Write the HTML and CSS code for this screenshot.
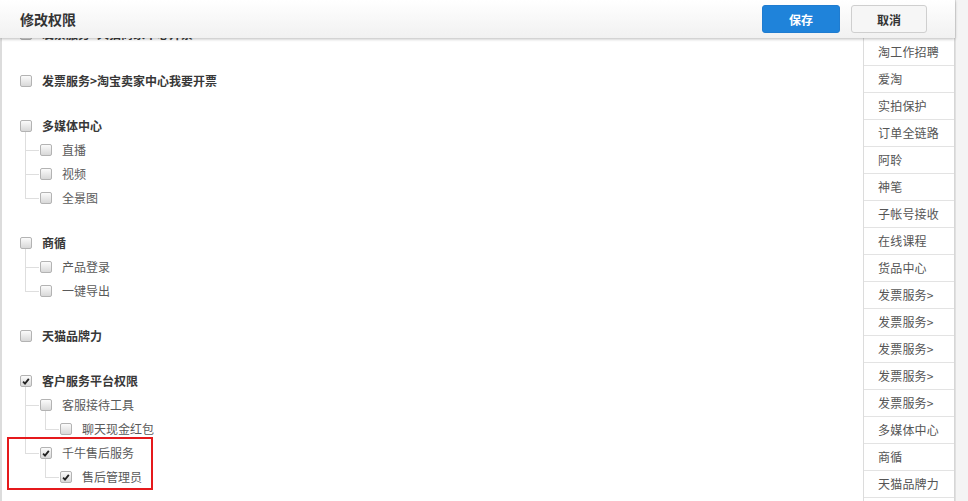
FILE: index.html
```html
<!DOCTYPE html>
<html lang="zh-CN">
<head>
<meta charset="utf-8">
<title>修改权限</title>
<link rel="stylesheet" href="styles.css">
</head>
<body>
<div class="page">
  <div class="main">
    <div class="group">
      <div class="row top"><span class="cb"></span><span class="lbl">发票服务>天猫商家中心开票</span></div>
    </div>
    <div class="group">
      <div class="row top"><span class="cb"></span><span class="lbl">发票服务>淘宝卖家中心我要开票</span></div>
    </div>
    <div class="group">
      <div class="row top"><span class="cb"></span><span class="lbl">多媒体中心</span></div>
      <ul class="children">
        <li><div class="row"><span class="cb"></span><span class="lbl">直播</span></div></li>
        <li><div class="row"><span class="cb"></span><span class="lbl">视频</span></div></li>
        <li><div class="row"><span class="cb"></span><span class="lbl">全景图</span></div></li>
      </ul>
    </div>
    <div class="group">
      <div class="row top"><span class="cb"></span><span class="lbl">商循</span></div>
      <ul class="children">
        <li><div class="row"><span class="cb"></span><span class="lbl">产品登录</span></div></li>
        <li><div class="row"><span class="cb"></span><span class="lbl">一键导出</span></div></li>
      </ul>
    </div>
    <div class="group">
      <div class="row top"><span class="cb"></span><span class="lbl">天猫品牌力</span></div>
    </div>
    <div class="group">
      <div class="row top"><span class="cb on"><svg viewBox="0 0 11 11"><path d="M2.3 5.6 L4.4 7.8 L8.6 2.6" fill="none" stroke="#222" stroke-width="2"/></svg></span><span class="lbl">客户服务平台权限</span></div>
      <ul class="children">
        <li>
          <div class="row"><span class="cb"></span><span class="lbl">客服接待工具</span></div>
          <ul class="children">
            <li><div class="row"><span class="cb"></span><span class="lbl">聊天现金红包</span></div></li>
          </ul>
        </li>
        <li>
          <div class="row"><span class="cb on"><svg viewBox="0 0 11 11"><path d="M2.3 5.6 L4.4 7.8 L8.6 2.6" fill="none" stroke="#222" stroke-width="2"/></svg></span><span class="lbl">千牛售后服务</span></div>
          <ul class="children">
            <li><div class="row"><span class="cb on"><svg viewBox="0 0 11 11"><path d="M2.3 5.6 L4.4 7.8 L8.6 2.6" fill="none" stroke="#222" stroke-width="2"/></svg></span><span class="lbl">售后管理员</span></div></li>
          </ul>
        </li>
      </ul>
    </div>
  </div>
  <ul class="sidebar">
    <li>淘工作招聘</li>
    <li>爱淘</li>
    <li>实拍保护</li>
    <li>订单全链路</li>
    <li>阿聆</li>
    <li>神笔</li>
    <li>子帐号接收</li>
    <li>在线课程</li>
    <li>货品中心</li>
    <li>发票服务&gt;</li>
    <li>发票服务&gt;</li>
    <li>发票服务&gt;</li>
    <li>发票服务&gt;</li>
    <li>发票服务&gt;</li>
    <li>多媒体中心</li>
    <li>商循</li>
    <li>天猫品牌力</li>
    <li></li>
  </ul>
  <div class="scroll"></div>

  <div class="header">
    <div class="title">修改权限</div>
    <div class="actions">
      <button class="btn primary">保存</button>
      <button class="btn">取消</button>
    </div>
  </div>
  <div class="mark"></div>
</div>
</body>
</html>
```

FILE: styles.css
```css
* { box-sizing: border-box; }
html, body {
  margin: 0;
  padding: 0;
  background: #fff;
  font-family: "Noto Sans CJK SC", "Liberation Sans", sans-serif;
  font-size: 12px;
  color: #555;
  overflow: hidden;
}
.page {
  position: relative;
  display: flex;
  width: 968px;
  height: 501px;
  overflow: hidden;
}
.main {
  flex: 1;
  border-left: 2px solid #dcdcdc;
  padding-top: 22px;
}
.group { margin-bottom: 21px; }
.group:first-child { margin-bottom: 23px; }
.row {
  height: 24px;
  display: flex;
  align-items: center;
}
.row.top { padding-left: 18px; }
.lbl {
  margin-left: 10px;
  line-height: 24px;
  white-space: nowrap;
  color: #5a5a5a;
}
.row.top .lbl {
  font-weight: bold;
  color: #383838;
}
.cb {
  width: 12px;
  height: 12px;
  flex: none;
  border: 1px solid #b3b3b3;
  border-radius: 2px;
  background: linear-gradient(#fbfbfb, #d8d8d8);
  display: flex;
  align-items: center;
  justify-content: center;
}
.cb svg { width: 11px; height: 11px; display: block; }
.children {
  list-style: none;
  margin: 0 0 0 23px;
  padding: 0;
}
.children .children { margin-left: 5px; }
.children > li {
  position: relative;
  padding-left: 15px;
}
.children > li::before {
  content: "";
  position: absolute;
  left: 0;
  top: 12px;
  width: 14px;
  border-top: 1px solid #dedede;
}
.children > li::after {
  content: "";
  position: absolute;
  left: 0;
  top: -6px;
  height: 18px;
  border-left: 1px solid #dedede;
}
.children > li:not(:last-child)::after { height: calc(100% + 6px); }

.sidebar {
  list-style: none;
  margin: 0;
  padding: 39px 0 0 0;
  width: 92px;
  flex: none;
  border-left: 1px solid #dcdcdc;
  border-right: 1px solid #d6d6d6;
}
.sidebar li {
  height: 27px;
  line-height: 26px;
  padding-left: 14px;
  border-bottom: 1px solid #e3e3e3;
  color: #555;
  white-space: nowrap;
  letter-spacing: 0.2px;
}
.scroll {
  width: 13px;
  flex: none;
  background: #f4f4f4;
  border-left: 1px solid #e0e0e0;
}

.header {
  position: absolute;
  left: 0;
  top: 0;
  width: 955px;
  height: 38px;
  background: linear-gradient(#ffffff, #f1f1f1);
  box-shadow: 0 1px 3px rgba(0,0,0,0.28);
  display: flex;
  align-items: center;
  justify-content: space-between;
  padding: 0 28px 0 20px;
}
.title {
  font-size: 14px;
  font-weight: bold;
  color: #333;
}
.actions { display: flex; gap: 11px; }
.btn {
  height: 28px;
  width: 76px;
  border: 1px solid #cfcfcf;
  border-radius: 3px;
  background: #f6f6f6;
  color: #333;
  font-family: inherit;
  font-size: 12px;
  font-weight: bold;
  padding: 0;
}
.btn.primary {
  width: 78px;
  background: #1f83da;
  border-color: #1f7cd0;
  color: #fff;
}
.mark {
  position: absolute;
  left: 7px;
  top: 437px;
  width: 146px;
  height: 53px;
  border: 2px solid #e5191c;
}
```
